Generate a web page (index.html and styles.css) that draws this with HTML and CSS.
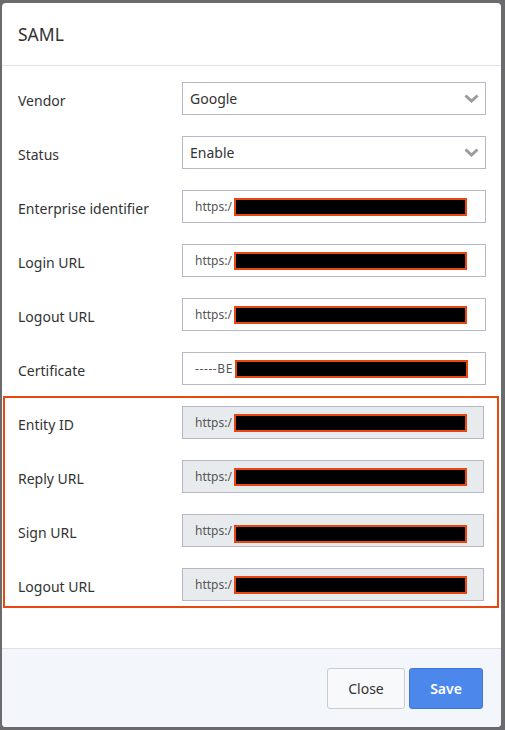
FILE: index.html
```html
<!DOCTYPE html>
<html lang="en">
<head>
  <meta charset="UTF-8">
  <title>SAML</title>
  <link rel="stylesheet" href="styles.css">
</head>
<body>
  <div class="modal">
    <div class="modal-header">SAML</div>

    <div class="modal-body">
      <div class="row">
        <label>Vendor</label>
        <div class="select">
          <span>Google</span>
          <svg width="15" height="9" viewBox="0 0 15 9"><polyline points="1.5,1.5 7.5,7 13.5,1.5" fill="none" stroke="#9b9b9b" stroke-width="3"/></svg>
        </div>
      </div>
      <div class="row">
        <label>Status</label>
        <div class="select">
          <span>Enable</span>
          <svg width="15" height="9" viewBox="0 0 15 9"><polyline points="1.5,1.5 7.5,7 13.5,1.5" fill="none" stroke="#9b9b9b" stroke-width="3"/></svg>
        </div>
      </div>
      <div class="row">
        <label>Enterprise identifier</label>
        <div class="field"><span>https:/</span><span class="redact"></span></div>
      </div>
      <div class="row">
        <label>Login URL</label>
        <div class="field"><span>https:/</span><span class="redact"></span></div>
      </div>
      <div class="row">
        <label>Logout URL</label>
        <div class="field"><span>https:/</span><span class="redact"></span></div>
      </div>
      <div class="row">
        <label>Certificate</label>
        <div class="field"><span class="cert">-----BE</span><span class="redact"></span></div>
      </div>

      <div class="highlight">
        <div class="row">
          <label>Entity ID</label>
          <div class="field readonly"><span>https:/</span><span class="redact"></span></div>
        </div>
        <div class="row">
          <label>Reply URL</label>
          <div class="field readonly"><span>https:/</span><span class="redact"></span></div>
        </div>
        <div class="row">
          <label>Sign URL</label>
          <div class="field readonly"><span>https:/</span><span class="redact low"></span></div>
        </div>
        <div class="row">
          <label>Logout URL</label>
          <div class="field readonly"><span>https:/</span><span class="redact"></span></div>
        </div>
      </div>
    </div>

    <div class="modal-footer">
      <button class="btn">Close</button>
      <button class="btn primary">Save</button>
    </div>
  </div>
</body>
</html>
```

FILE: styles.css
```css
body {
  margin: 0;
  padding: 3px 4px 3px 2px;
  background: #6b6b6d;
  font-family: "Noto Sans", "Open Sans", sans-serif;
  color: #333;
}

.modal {
  background: white;
  height: 724px;
  border-radius: 4px;
  display: flex;
  flex-direction: column;
  overflow: hidden;
}

.modal-header {
  height: 62px;
  padding-left: 16px;
  display: flex;
  align-items: center;
  font-size: 17.5px;
  border-bottom: 1px solid #dfe2e8;
  flex-shrink: 0;
}

.modal-body {
  flex: 1;
  padding: 16px 15px 0 16px;
  display: flex;
  flex-direction: column;
  gap: 21px;
}

.row {
  display: flex;
  align-items: center;
  height: 33px;
}

.row label {
  width: 164px;
  font-size: 14px;
  padding-top: 3px;
}

.select,
.field {
  flex: 1;
  height: 33px;
  box-sizing: border-box;
  border: 1px solid #b8b7c8;
  display: flex;
  align-items: center;
  font-size: 14px;
}

.select {
  padding: 0 6px 0 7px;
  justify-content: space-between;
}

.select svg {
  margin-top: -1px;
}

.field {
  padding-left: 12px;
  font-size: 12px;
  color: #555;
}

.field.readonly {
  background: #e8ebee;
}

.cert {
  letter-spacing: 0.6px;
}

.redact {
  width: 229px;
  height: 14px;
  background: black;
  border: 2px solid #e8470f;
  margin-left: 2px;
}

.redact.low {
  margin-top: 7px;
}

.highlight {
  margin: -10px -13px 0 -15px;
  padding: 8px 13px 5px 13px;
  border: 2px solid #e8470f;
  display: flex;
  flex-direction: column;
  gap: 21px;
}

.modal-footer {
  height: 79px;
  box-sizing: border-box;
  background: #f3f6fa;
  border-top: 1px solid #dadfe8;
  display: flex;
  justify-content: flex-end;
  align-items: flex-start;
  gap: 4px;
  padding: 19px 18px 0 0;
  flex-shrink: 0;
}

.btn {
  height: 41px;
  width: 78px;
  font-family: inherit;
  font-size: 14px;
  color: #333;
  background: #f8f9fb;
  border: 1px solid #c9ccd3;
  border-radius: 3px;
}

.btn.primary {
  width: 74px;
  background: #4c88ec;
  border-color: #3f77d8;
  color: white;
  font-weight: 600;
}
```
